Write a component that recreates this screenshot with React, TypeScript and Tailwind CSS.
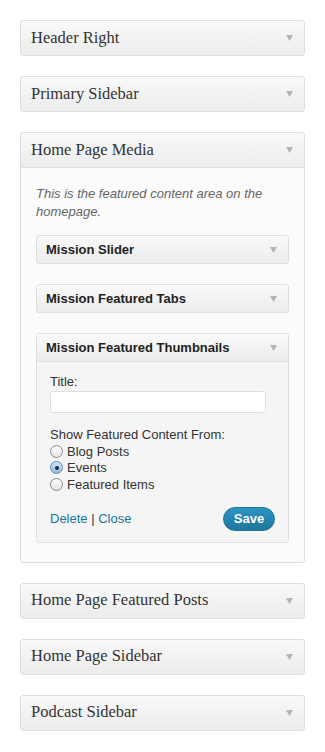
import React from "react";

const Arrow = () => (
  <svg width="7" height="6" viewBox="0 0 7 6" className="shrink-0">
    <path d="M0 0 L7 0 L3.5 6 Z" fill="#b4b4b4" />
  </svg>
);

const OuterHeader = ({ title, open }: { title: string; open?: boolean }) => (
  <div
    className={`flex items-center justify-between pl-[10px] pr-[11px] bg-gradient-to-b from-[#f9f9f9] to-[#ececec] ${open ? "h-[35px] border-b border-[#dfdfdf]" : "h-[34px]"}`}
  >
    <span
      className="text-[16.5px] text-[#333]"
      style={{ fontFamily: "'Liberation Serif', Georgia, serif" }}
    >
      {title}
    </span>
    <Arrow />
  </div>
);

const OuterBox = ({ title }: { title: string }) => (
  <div className="border border-[#dfdfdf] rounded-[3px] overflow-hidden">
    <OuterHeader title={title} />
  </div>
);

const InnerHeader = ({ title, open }: { title: string; open?: boolean }) => (
  <div
    className={`flex items-center justify-between pl-[9px] pr-[11px] bg-gradient-to-b from-[#f9f9f9] to-[#ececec] ${open ? "h-[28px] border-b border-[#dfdfdf]" : "h-[27px]"}`}
  >
    <span className="text-[13px] font-bold text-[#222]">{title}</span>
    <Arrow />
  </div>
);

const InnerBox = ({ title }: { title: string }) => (
  <div className="border border-[#dfdfdf] rounded-[3px] overflow-hidden">
    <InnerHeader title={title} />
  </div>
);

const Radio = ({ checked, label }: { checked?: boolean; label: string }) => (
  <div className="flex items-center h-[16.5px]">
    <span
      className={`w-[13px] h-[13px] rounded-full border ${checked ? "border-[#5b8bb8] bg-gradient-to-b from-[#cfe4f7] to-[#8fbde6]" : "border-[#8a8a8a] bg-gradient-to-b from-[#ffffff] to-[#e4e4e4]"} flex items-center justify-center`}
    >
      {checked && <span className="w-[4px] h-[4px] rounded-full bg-[#1c2a3a]" />}
    </span>
    <span className="ml-[4px] text-[13px] text-[#333]">{label}</span>
  </div>
);

export default function App() {
  return (
    <div
      className="w-[325px] h-[752px] bg-white px-[20px] pt-[20px] flex flex-col gap-[20px]"
      style={{ fontFamily: "'Liberation Sans', Arial, sans-serif" }}
    >
      <OuterBox title="Header Right" />
      <OuterBox title="Primary Sidebar" />
      <div className="border border-[#dfdfdf] rounded-[3px] overflow-hidden bg-[#fbfbfb]">
        <OuterHeader title="Home Page Media" open />
        <div className="px-[15px] pt-[17px] pb-[19px] flex flex-col">
          <p className="italic text-[13px] leading-[18px] text-[#666] mb-[14px]">
            This is the featured content area on the homepage.
          </p>
          <div className="flex flex-col gap-[20px]">
            <InnerBox title="Mission Slider" />
            <InnerBox title="Mission Featured Tabs" />
            <div className="border border-[#dfdfdf] rounded-[3px] overflow-hidden bg-[#f5f5f5]">
              <InnerHeader title="Mission Featured Thumbnails" open />
              <div className="pl-[13px] pr-[22px] pt-[12px] pb-[11px] text-[13px] text-[#333]">
                <div className="leading-[16px]">Title:</div>
                <div className="mt-[1px] h-[22px] bg-white border border-[#dfdfdf] rounded-[3px]" />
                <div className="mt-[14px] leading-[16px]">Show Featured Content From:</div>
                <Radio label="Blog Posts" />
                <Radio label="Events" checked />
                <Radio label="Featured Items" />
                <div className="mt-[14px] flex items-center justify-between">
                  <div className="text-[13px]">
                    <span className="text-[#21759b]">Delete</span>
                    <span className="text-[#333]"> | </span>
                    <span className="text-[#21759b]">Close</span>
                  </div>
                  <div className="h-[24px] w-[52px] -mr-[9px] rounded-full bg-gradient-to-b from-[#2a95c5] to-[#21759b] border border-[#21759b] flex items-center justify-center text-white text-[13px] font-bold">
                    Save
                  </div>
                </div>
              </div>
            </div>
          </div>
        </div>
      </div>
      <OuterBox title="Home Page Featured Posts" />
      <OuterBox title="Home Page Sidebar" />
      <OuterBox title="Podcast Sidebar" />
    </div>
  );
}
